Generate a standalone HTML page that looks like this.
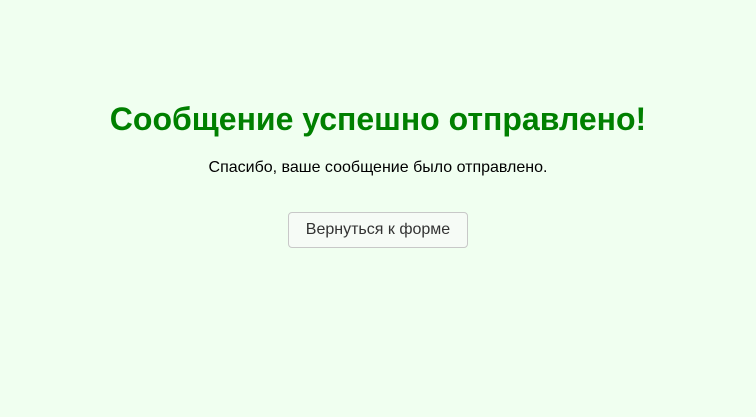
<!DOCTYPE html>
<html><head><meta charset="utf-8"><style>
html,body{margin:0;height:417px;background:#f0fff0;font-family:"Liberation Sans",Arial,sans-serif;}
.wrap{text-align:center;padding-top:101px;}
h1{margin:0;color:#008000;font-size:32px;font-weight:bold;line-height:37px;}
p{margin:20px 0 0;font-size:16px;line-height:19px;color:#000;}
.btn{display:inline-block;margin-top:35px;width:180px;height:36px;box-sizing:border-box;border:1px solid #c8c8c8;border-radius:4px;background:#f6fbf6;font-size:16px;line-height:34px;color:#333;}
</style></head><body><div class="wrap">
<h1>Сообщение успешно отправлено!</h1>
<p>Спасибо, ваше сообщение было отправлено.</p>
<div class="btn">Вернуться к форме</div>
</div></body></html>
